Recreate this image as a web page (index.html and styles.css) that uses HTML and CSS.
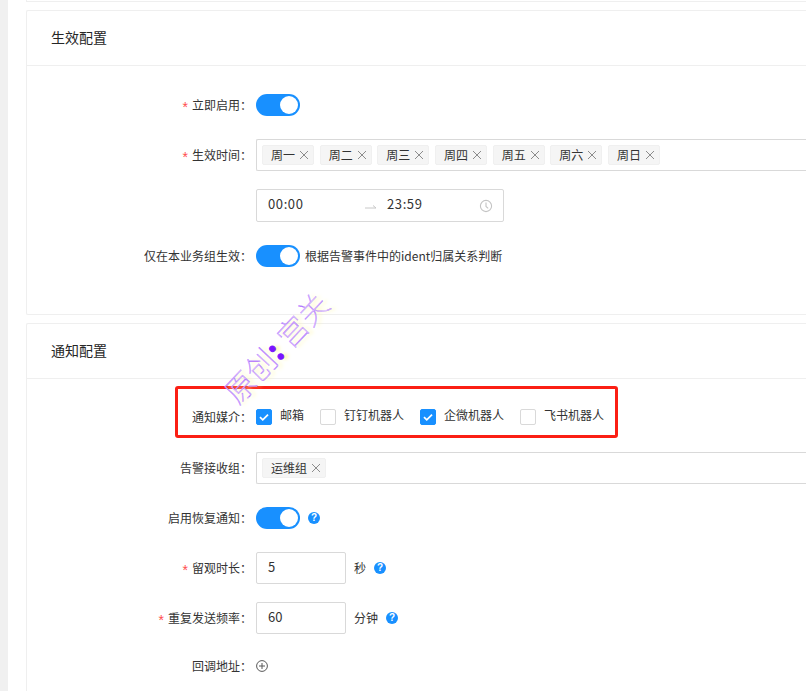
FILE: index.html
```html
<!DOCTYPE html>
<html lang="zh">
<head>
<meta charset="utf-8">
<title>告警规则</title>
<link rel="stylesheet" href="styles.css">
</head>
<body>
<div class="strip"></div>
<main class="main">
  <div class="stub"></div>
  <section class="card card-a">
    <h2 class="card-head">生效配置</h2>
    <div class="card-body body-a">
      <div class="row row-switch">
        <label class="label"><span class="req">*</span>立即启用：</label>
        <span class="switch"><i class="knob"></i></span>
      </div>
      <div class="row row-select">
        <label class="label"><span class="req">*</span>生效时间：</label>
        <div class="select">
          <span class="tag">周一<svg class="x" viewBox="0 0 10 10"><path d="M1 1l8 8M9 1l-8 8"/></svg></span>
          <span class="tag">周二<svg class="x" viewBox="0 0 10 10"><path d="M1 1l8 8M9 1l-8 8"/></svg></span>
          <span class="tag">周三<svg class="x" viewBox="0 0 10 10"><path d="M1 1l8 8M9 1l-8 8"/></svg></span>
          <span class="tag">周四<svg class="x" viewBox="0 0 10 10"><path d="M1 1l8 8M9 1l-8 8"/></svg></span>
          <span class="tag">周五<svg class="x" viewBox="0 0 10 10"><path d="M1 1l8 8M9 1l-8 8"/></svg></span>
          <span class="tag">周六<svg class="x" viewBox="0 0 10 10"><path d="M1 1l8 8M9 1l-8 8"/></svg></span>
          <span class="tag">周日<svg class="x" viewBox="0 0 10 10"><path d="M1 1l8 8M9 1l-8 8"/></svg></span>
        </div>
      </div>
      <div class="row row-time">
        <span class="label"></span>
        <div class="timebox">
          <span class="time-a">00:00</span>
          <svg class="arrow" viewBox="0 0 12 6"><path d="M0 5h11L8 2.5"/></svg>
          <span class="time-b">23:59</span>
          <svg class="clock" viewBox="0 0 14 14"><circle cx="7" cy="7" r="5.6"/><path d="M7 3.6V7.4L9.2 9.4"/></svg>
        </div>
      </div>
      <div class="row row-switch2">
        <label class="label">仅在本业务组生效：</label>
        <span class="switch"><i class="knob"></i></span>
        <span class="hint">根据告警事件中的ident归属关系判断</span>
      </div>
    </div>
  </section>
  <section class="card card-b">
    <h2 class="card-head">通知配置</h2>
    <div class="card-body body-b">
      <div class="row row-media">
        <label class="label">通知媒介：</label>
        <div class="checks">
          <span class="check"><i class="box on"><svg viewBox="0 0 16 16"><path d="M3.4 8.2l3.2 3 6-6"/></svg></i><span class="check-text">邮箱</span></span>
          <span class="check"><i class="box"></i><span class="check-text">钉钉机器人</span></span>
          <span class="check"><i class="box on"><svg viewBox="0 0 16 16"><path d="M3.4 8.2l3.2 3 6-6"/></svg></i><span class="check-text">企微机器人</span></span>
          <span class="check"><i class="box"></i><span class="check-text">飞书机器人</span></span>
        </div>
      </div>
      <div class="row row-group">
        <label class="label">告警接收组：</label>
        <div class="select"><span class="tag tag-group">运维组<svg class="x" viewBox="0 0 10 10"><path d="M1 1l8 8M9 1l-8 8"/></svg></span></div>
      </div>
      <div class="row row-recover">
        <label class="label">启用恢复通知：</label>
        <span class="switch"><i class="knob"></i></span>
        <span class="help help-switch">?</span>
      </div>
      <div class="row row-observe">
        <label class="label"><span class="req">*</span>留观时长：</label>
        <span class="num">5</span>
        <span class="unit">秒</span>
        <span class="help">?</span>
      </div>
      <div class="row row-repeat">
        <label class="label"><span class="req">*</span>重复发送频率：</label>
        <span class="num">60</span>
        <span class="unit">分钟</span>
        <span class="help">?</span>
      </div>
      <div class="row row-callback">
        <label class="label">回调地址：</label>
        <svg class="plus" viewBox="0 0 12 12"><circle cx="6" cy="6" r="5.4"/><path d="M6 3v6M3 6h6"/></svg>
      </div>
    </div>
  </section>
</main>
<div class="redbox"></div>
<div class="watermark">原创<b class="wm-colon">:</b> 宫关</div>
</body>
</html>
```
FILE: styles.css
```css
* { box-sizing: border-box; }
html, body { margin: 0; height: 691px; overflow: hidden; background: #fff; }
body {
  display: flex;
  position: relative;
  font-family: "Noto Sans CJK SC", "Noto Sans", sans-serif;
  font-size: 12px;
  color: #333;
}
.strip { width: 8px; flex: none; background: #f0f0f0; }
.main { flex: 1; padding-left: 18px; min-width: 0; }
.stub { height: 2px; border: 1px solid #efefef; border-top: 0; border-right: 0; margin-right: -10px; }
.card {
  border: 1px solid #efefef;
  border-right: 0;
  border-radius: 2px 0 0 2px;
  margin-top: 8px;
  background: #fff;
}
.card-a { height: 305px; }
.card-b { height: 400px; }
.card-head {
  margin: 0;
  height: 55px;
  padding-left: 24px;
  border-bottom: 1px solid #efefef;
  font-size: 14px;
  font-weight: 400;
  line-height: 52px;
  color: #262626;
}
.card-body { display: flex; flex-direction: column; }
.body-a { padding-top: 28px; }
.body-b { padding-top: 28px; }
.row { display: flex; align-items: center; }
.label {
  flex: none;
  width: 229px;
  padding-right: 4px;
  padding-bottom: 1px;
  text-align: right;
  line-height: 20px;
  color: #333;
  white-space: nowrap;
}
.req {
  color: #ff4d4f;
  margin-right: 4px;
  font-family: "Liberation Sans", sans-serif;
  font-size: 14px;
  line-height: 1;
  vertical-align: -2px;
}
.switch {
  flex: none;
  position: relative;
  width: 44px;
  height: 22px;
  border-radius: 11px;
  background: #1890ff;
}
.knob {
  position: absolute;
  top: 2px;
  right: 2px;
  width: 18px;
  height: 18px;
  border-radius: 50%;
  background: #fff;
}
.row-switch { height: 22px; }
.row-select { height: 32px; margin-top: 23px; }
.row-time { height: 33px; margin-top: 18px; }
.row-switch2 { height: 22px; margin-top: 23px; }
.select {
  flex: 1;
  height: 32px;
  display: flex;
  align-items: center;
  gap: 5.67px;
  padding-left: 5px;
  margin-right: -4px;
  border: 1px solid #d9d9d9;
  border-right: 0;
  border-radius: 2px 0 0 2px;
}
.tag {
  flex: none;
  display: flex;
  align-items: center;
  height: 20px;
  width: 52px;
  padding-left: 8px;
  padding-bottom: 1px;
  background: #f5f5f5;
  border: 1px solid #f0f0f0;
  border-radius: 2px;
  line-height: 18px;
  color: #333;
}
.tag-group { width: 64px; }
.x { width: 10px; height: 10px; margin-left: 4px; fill: none; stroke: #8c8c8c; stroke-width: 1; }
.timebox {
  position: relative;
  width: 248px;
  height: 33px;
  display: flex;
  align-items: center;
  padding-left: 11px;
  padding-bottom: 4px;
  border: 1px solid #d9d9d9;
  border-radius: 2px;
  font-size: 13px;
  letter-spacing: .6px;
  color: #333;
}
.time-a { width: 97px; }
.arrow { width: 12px; height: 6px; fill: none; stroke: #c8c8c8; stroke-width: 1; margin-top: 5px; }
.time-b { margin-left: 10px; }
.clock { position: absolute; right: 10px; top: 9px; width: 14px; height: 14px; fill: none; stroke: #c4c4c4; stroke-width: 1.1; }
.hint { margin-left: 5px; padding-bottom: 2px; color: #333; }
.row-media { height: 20px; }
.row-group { height: 32px; margin-top: 25px; }
.row-recover { height: 22px; margin-top: 23px; }
.row-observe { height: 32px; margin-top: 23px; }
.row-repeat { height: 32px; margin-top: 18px; }
.row-callback { height: 18px; margin-top: 23px; }
.checks { display: flex; align-items: center; }
.check { display: flex; align-items: center; margin-right: 16px; line-height: 16px; color: #333; }
.check-text { padding-bottom: 4px; }
.box {
  flex: none;
  width: 16px;
  height: 16px;
  margin-right: 8px;
  border: 1px solid #d9d9d9;
  border-radius: 2px;
  background: #fff;
}
.box.on { background: #1890ff; border-color: #1890ff; }
.box svg { display: block; width: 14px; height: 14px; fill: none; stroke: #fff; stroke-width: 2; }
.help {
  flex: none;
  width: 12px;
  height: 12px;
  border-radius: 50%;
  background: #1890ff;
  color: #fff;
  font: 700 10px/12px "Liberation Sans", sans-serif;
  text-align: center;
}
.help-switch { margin-left: 8px; }
.num {
  flex: none;
  width: 90px;
  height: 32px;
  padding-left: 11px;
  border: 1px solid #d9d9d9;
  border-radius: 2px;
  line-height: 28px;
  font-size: 13px;
  color: #333;
}
.unit { margin-left: 8px; margin-right: 8px; padding-bottom: 1px; }
.plus { width: 12px; height: 12px; fill: none; stroke: #595959; stroke-width: 1; }
.redbox {
  position: absolute;
  left: 175px;
  top: 386px;
  width: 443px;
  height: 52px;
  border: 3px solid #fb1f14;
  border-radius: 3px;
  pointer-events: none;
}
.watermark {
  position: absolute;
  left: 205px;
  top: 322px;
  width: 150px;
  font-family: "Noto Sans CJK SC", sans-serif;
  font-size: 30px;
  font-weight: 100;
  line-height: 40px;
  white-space: nowrap;
  color: #f1e6ff;
  -webkit-text-stroke: .3px #8a2cff;
  text-shadow: 3px 3px 4px #fff7a8;
  transform: rotate(-47deg);
  transform-origin: center;
}
.wm-colon { color: #7a14ff; font-weight: 700; -webkit-text-stroke: 1px #7a14ff; }
```
